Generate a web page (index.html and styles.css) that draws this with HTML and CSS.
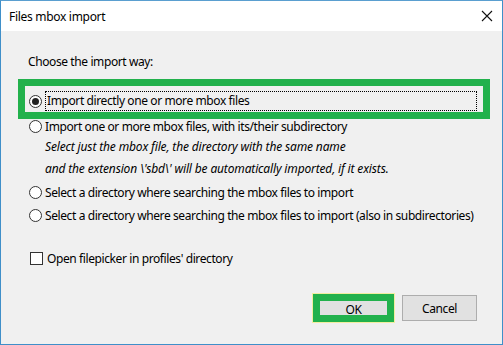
FILE: index.html
```html
<!DOCTYPE html>
<html lang="en">
<head>
    <meta charset="UTF-8">
    <title>Files mbox import</title>
    <link rel="stylesheet" href="styles.css">
</head>
<body>
    <div class="dialog">
        <div class="title-bar">
            <span class="title">Files mbox import</span>
            <svg class="close" width="12" height="12" viewBox="0 0 12 12">
                <path d="M1 1 L11 11 M11 1 L1 11" stroke="#111" stroke-width="1.1" fill="none"/>
            </svg>
        </div>
        <div class="content">
            <div class="prompt">Choose the import way:</div>

            <div class="option first">
                <span class="radio checked"></span>
                <span class="focus">Import directly one or more mbox files</span>
            </div>
            <div class="option second">
                <span class="radio"></span>
                <span>Import one or more mbox files, with its/their subdirectory</span>
            </div>
            <div class="note">Select just the mbox file, the directory with the same name</div>
            <div class="note">and the extension \'sbd\' will be automatically imported, if it exists.</div>
            <div class="option third">
                <span class="radio"></span>
                <span>Select a directory where searching the mbox files to import</span>
            </div>
            <div class="option fourth">
                <span class="radio"></span>
                <span>Select a directory where searching the mbox files to import (also in subdirectories)</span>
            </div>

            <div class="option check-row">
                <span class="checkbox"></span>
                <span>Open filepicker in profiles' directory</span>
            </div>

            <div class="buttons">
                <button type="button" class="btn btn-ok">OK</button>
                <button type="button" class="btn">Cancel</button>
            </div>
        </div>
        <!-- annotation box over the first choice -->
        <div class="highlight"></div>
    </div>
</body>
</html>
```

FILE: styles.css
```css
body {
    margin: 0;
    font-family: "Noto Sans", "Open Sans", sans-serif;
    font-size: 12px;
    letter-spacing: -0.4px;
    color: #000;
    background-color: #fff;
}
.dialog {
    position: relative;
    width: 503px;
    height: 345px;
    box-sizing: border-box;
    border: 1px solid #3f8fc9;
    border-top-color: #5a9fd0;
    display: flex;
    flex-direction: column;
}
.title-bar {
    height: 30px;
    background-color: #fff;
    display: flex;
    align-items: center;
    justify-content: space-between;
    padding: 0 9px 0 8px;
}
.title {
    font-size: 12px;
    letter-spacing: -0.3px;
}
.close {
    margin-top: -1px;
}
.content {
    flex: 1;
    background-color: #f0f0f0;
    padding: 21px 0 0 27px;
    display: flex;
    flex-direction: column;
}
.prompt {
    height: 20px;
    line-height: 20px;
}
.option {
    height: 20px;
    display: flex;
    align-items: center;
    margin-left: 1px;
    white-space: nowrap;
}
.option.first {
    margin-top: 19px;
}
.option.second {
    margin-top: 5px;
}
.option.third {
    margin-top: 2px;
}
.option.fourth {
    margin-top: 3px;
}
.option.check-row {
    margin-top: 23px;
}
.note {
    height: 22px;
    line-height: 22px;
    font-style: italic;
    letter-spacing: -0.15px;
    margin-left: 17px;
    white-space: nowrap;
}
.note:first-of-type {
    margin-top: 1px;
}
.radio {
    width: 11px;
    height: 11px;
    border: 1px solid #333;
    border-radius: 50%;
    background-color: #fff;
    margin-right: 3px;
    display: flex;
    align-items: center;
    justify-content: center;
    flex-shrink: 0;
}
.radio.checked::after {
    content: "";
    width: 7px;
    height: 7px;
    border-radius: 50%;
    background-color: #222;
}
.checkbox {
    width: 11px;
    height: 11px;
    border: 1px solid #333;
    background-color: #fff;
    margin: 0 4px 0 1px;
    flex-shrink: 0;
}
.focus {
    flex: 1;
    margin-right: 25px;
    height: 18px;
    line-height: 18px;
    border: 1px dotted #000;
    padding-left: 1px;
}
.buttons {
    margin-top: auto;
    margin-bottom: 22px;
    display: flex;
    justify-content: flex-end;
    align-items: center;
    gap: 8px;
    padding-right: 25px;
}
.btn {
    width: 75px;
    height: 26px;
    border: 1px solid #adadad;
    background-color: #e1e1e1;
    font-family: inherit;
    font-size: 12px;
    letter-spacing: inherit;
    color: #000;
    padding: 0;
}
.btn-ok {
    width: 81px;
    height: 28px;
    border: 7px solid #22b14c;
    outline: 1px solid #f2eea0;
}
.highlight {
    position: absolute;
    left: 17px;
    top: 78px;
    width: 458px;
    height: 26px;
    border: 7px solid #22b14c;
    pointer-events: none;
}
```
